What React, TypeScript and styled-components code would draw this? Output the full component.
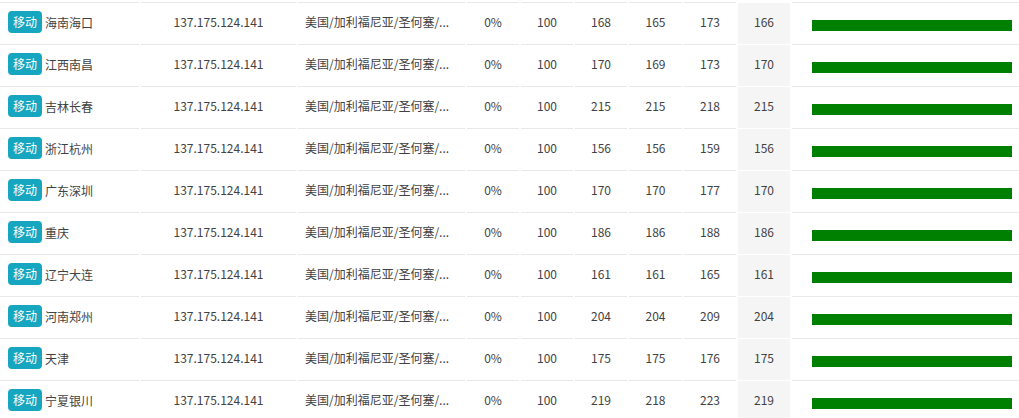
import React from "react";
import styled, { createGlobalStyle } from "styled-components";

const Global = createGlobalStyle`
  html, body { margin: 0; padding: 0; background: #fff; overflow: hidden; }
  body { font-family: "Noto Sans CJK SC", "Noto Sans", sans-serif; }
`;

const Table = styled.table`
  border-collapse: separate;
  border-spacing: 2px 0;
  table-layout: fixed;
  width: 1025px;
  margin: 2px 0 0 -2px;
  font-size: 12px;
  color: #424242;
`;

const Col = styled.col<{ $w?: number }>`
  width: ${(p) => (p.$w ? `${p.$w}px` : "auto")};
`;

const Row = styled.tr`
  height: 42px;
`;

const Cell = styled.td<{ $align?: "left" | "center"; $shade?: boolean; $pad?: number }>`
  border-top: 1px solid ${(p) => (p.$shade ? "#ffffff" : "#e6e9eb")};
  background: ${(p) => (p.$shade ? "#f5f5f6" : "transparent")};
  text-align: ${(p) => p.$align ?? "center"};
  padding: 0 0 3px ${(p) => p.$pad ?? 0}px;
  vertical-align: middle;
  white-space: nowrap;
  overflow: hidden;
  line-height: 20px;
`;

const Badge = styled.span`
  display: inline-block;
  background: #17a6bf;
  color: #fff;
  border-radius: 4px;
  padding: 0 5px;
  height: 22px;
  line-height: 22px;
  margin-right: 3px;
  vertical-align: middle;
`;

const Name = styled.span`
  vertical-align: middle;
`;

const BarCell = styled.td`
  border-top: 1px solid #e6e9eb;
  padding: 4px 0 0 20px;
  vertical-align: middle;
`;

const Bar = styled.div`
  width: 200px;
  height: 11px;
  background: #008000;
`;

type RowData = { city: string; a: number; b: number; c: number; d: number };

const rows: RowData[] = [
  { city: "海南海口", a: 168, b: 165, c: 173, d: 166 },
  { city: "江西南昌", a: 170, b: 169, c: 173, d: 170 },
  { city: "吉林长春", a: 215, b: 215, c: 218, d: 215 },
  { city: "浙江杭州", a: 156, b: 156, c: 159, d: 156 },
  { city: "广东深圳", a: 170, b: 170, c: 177, d: 170 },
  { city: "重庆", a: 186, b: 186, c: 188, d: 186 },
  { city: "辽宁大连", a: 161, b: 161, c: 165, d: 161 },
  { city: "河南郑州", a: 204, b: 204, c: 209, d: 204 },
  { city: "天津", a: 175, b: 175, c: 176, d: 175 },
  { city: "宁夏银川", a: 219, b: 218, c: 223, d: 219 },
];

const widths = [139, 155, 167, 52, 52, 52, 53, 52, 52];

export default function App() {
  return (
    <>
      <Global />
      <Table>
        <colgroup>
          {widths.map((w, i) => (
            <Col key={i} $w={w} />
          ))}
          <Col />
        </colgroup>
        <tbody>
          {rows.map((r) => (
            <Row key={r.city}>
              <Cell $align="left" $pad={8}>
                <Badge>移动</Badge>
                <Name>{r.city}</Name>
              </Cell>
              <Cell>137.175.124.141</Cell>
              <Cell $align="left" $pad={7}>美国/加利福尼亚/圣何塞/...</Cell>
              <Cell>0%</Cell>
              <Cell>100</Cell>
              <Cell>{r.a}</Cell>
              <Cell>{r.b}</Cell>
              <Cell>{r.c}</Cell>
              <Cell $shade>{r.d}</Cell>
              <BarCell>
                <Bar />
              </BarCell>
            </Row>
          ))}
        </tbody>
      </Table>
    </>
  );
}
